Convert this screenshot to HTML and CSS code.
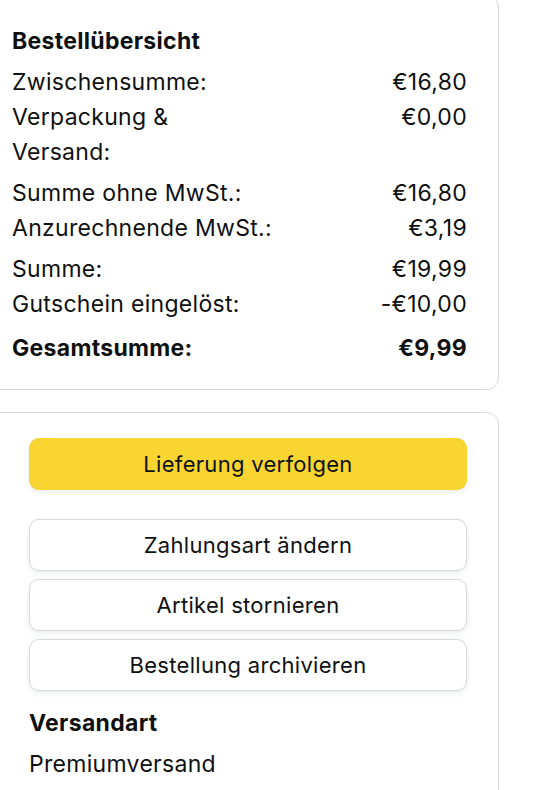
FILE: index.html
```html
<!DOCTYPE html>
<html lang="de">
<head>
    <meta charset="UTF-8">
    <meta name="viewport" content="width=device-width, initial-scale=1.0">
    <title>Bestellübersicht</title>
    <link rel="stylesheet" href="styles.css">
</head>
<body>
    <div class="page">
        <!-- Order summary -->
        <section class="card summary">
            <h2 class="card-title">Bestellübersicht</h2>
            <div class="group">
                <div class="row"><span class="label">Zwischensumme:</span><span class="amount">€16,80</span></div>
                <div class="row"><span class="label">Verpackung &amp;<br>Versand:</span><span class="amount">€0,00</span></div>
            </div>
            <div class="group">
                <div class="row"><span class="label">Summe ohne MwSt.:</span><span class="amount">€16,80</span></div>
                <div class="row"><span class="label">Anzurechnende MwSt.:</span><span class="amount">€3,19</span></div>
            </div>
            <div class="group">
                <div class="row"><span class="label">Summe:</span><span class="amount">€19,99</span></div>
                <div class="row"><span class="label">Gutschein eingelöst:</span><span class="amount">-€10,00</span></div>
            </div>
            <div class="group total">
                <div class="row"><span class="label">Gesamtsumme:</span><span class="amount">€9,99</span></div>
            </div>
        </section>

        <!-- Actions -->
        <section class="card actions">
            <button class="btn btn-primary">Lieferung verfolgen</button>
            <div class="btn-list">
                <button class="btn">Zahlungsart ändern</button>
                <button class="btn">Artikel stornieren</button>
                <button class="btn">Bestellung archivieren</button>
            </div>
            <h3 class="section-title">Versandart</h3>
            <p class="section-text">Premiumversand</p>
        </section>
    </div>
</body>
</html>
```

FILE: styles.css
```css
/* Core Styling */
*, *:before, *:after {
    margin: 0;
    padding: 0;
    box-sizing: border-box;
}

body {
    font-family: Inter, "Liberation Sans", sans-serif;
    background-color: #fff;
    color: #0f1111;
    font-size: 23px;
    letter-spacing: 0.3px;
    overflow: hidden;
}

.page {
    width: 519px;
    margin: -5px 0 0 -20px;
}

.card {
    border: 1px solid #d5d9d9;
    border-radius: 12px;
    background-color: #fff;
}

/* Summary card */
.summary {
    padding: 28px 31px 23px 31px;
}

.card-title {
    font-size: 23px;
    font-weight: bold;
    line-height: 35px;
    margin-bottom: 6px;
}

.group + .group {
    margin-top: 6px;
}

.group.total {
    margin-top: 9px;
}

.row {
    display: flex;
    justify-content: space-between;
    line-height: 35px;
}

.amount {
    text-align: right;
}

.total .row {
    font-weight: bold;
}

/* Actions card */
.actions {
    margin-top: 22px;
    padding: 25px 31px 40px 48px;
}

.btn {
    display: block;
    width: 100%;
    height: 52px;
    font-family: inherit;
    font-size: 22px;
    letter-spacing: 0.3px;
    color: #0f1111;
    background-color: #fff;
    border: 1px solid #d5d9d9;
    border-radius: 10px;
    box-shadow: 0 2px 5px rgba(213, 217, 217, 0.5);
    cursor: pointer;
}

.btn-primary {
    background-color: #f8d530;
    border-color: #f8d530;
}

.btn-list {
    display: flex;
    flex-direction: column;
    gap: 8px;
    margin-top: 29px;
}

.section-title {
    font-size: 23px;
    font-weight: bold;
    line-height: 30px;
    margin-top: 17px;
}

.section-text {
    line-height: 30px;
    margin-top: 11px;
}
```
